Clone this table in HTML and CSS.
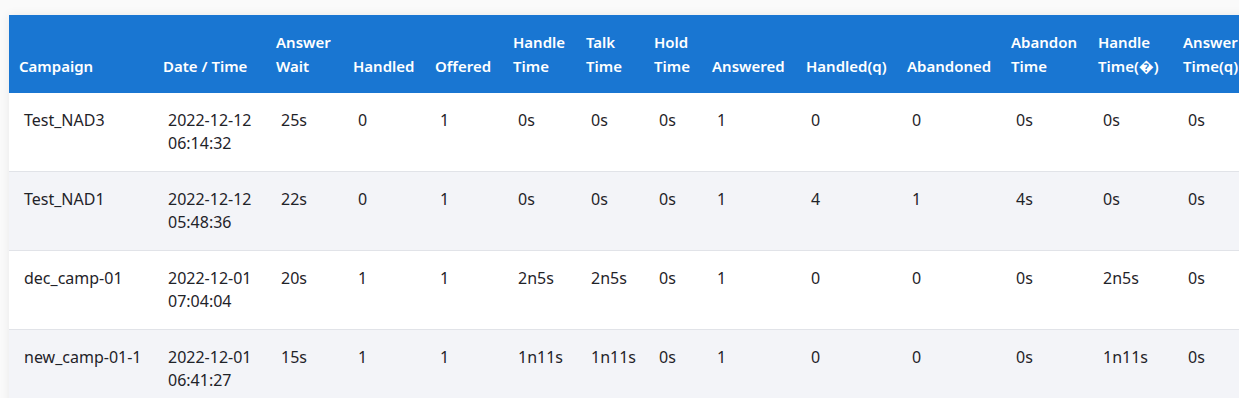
FILE: index.html
```html
<!DOCTYPE html>
<html>
<head>
<meta charset="utf-8">
<link rel="stylesheet" href="styles.css">
</head>
<body>
<div class="page">
  <div class="card">
    <table class="report">
      <thead>
        <tr>
          <th>Campaign</th>
          <th>Date / Time</th>
          <th>Answer<br>Wait</th>
          <th>Handled</th>
          <th>Offered</th>
          <th>Handle<br>Time</th>
          <th>Talk<br>Time</th>
          <th>Hold<br>Time</th>
          <th>Answered</th>
          <th>Handled(q)</th>
          <th>Abandoned</th>
          <th>Abandon<br>Time</th>
          <th>Handle<br>Time(&#xFFFD;)</th>
          <th>Answer<br>Time(q)</th>
        </tr>
      </thead>
      <tbody>
        <tr>
          <td>Test_NAD3</td><td>2022-12-12<br>06:14:32</td><td>25s</td><td>0</td><td>1</td><td>0s</td><td>0s</td><td>0s</td><td>1</td><td>0</td><td>0</td><td>0s</td><td>0s</td><td>0s</td>
        </tr>
        <tr>
          <td>Test_NAD1</td><td>2022-12-12<br>05:48:36</td><td>22s</td><td>0</td><td>1</td><td>0s</td><td>0s</td><td>0s</td><td>1</td><td>4</td><td>1</td><td>4s</td><td>0s</td><td>0s</td>
        </tr>
        <tr>
          <td>dec_camp-01</td><td>2022-12-01<br>07:04:04</td><td>20s</td><td>1</td><td>1</td><td>2n5s</td><td>2n5s</td><td>0s</td><td>1</td><td>0</td><td>0</td><td>0s</td><td>2n5s</td><td>0s</td>
        </tr>
        <tr>
          <td>new_camp-01-1</td><td>2022-12-01<br>06:41:27</td><td>15s</td><td>1</td><td>1</td><td>1n11s</td><td>1n11s</td><td>0s</td><td>1</td><td>0</td><td>0</td><td>0s</td><td>1n11s</td><td>0s</td>
        </tr>
      </tbody>
    </table>
  </div>
</div>
</body>
</html>
```

FILE: styles.css
```css
html, body {
  margin: 0;
  padding: 0;
  overflow: hidden;
  background: #fafafa;
}

.page {
  padding: 15px 0 0 9px;
  width: 1400px;
}

.card {
  display: inline-block;
  background: #ffffff;
  box-shadow: 0 0 10px rgba(0, 0, 0, 0.07);
}

.report {
  border-collapse: collapse;
  table-layout: fixed;
  font-family: "Noto Sans", "Open Sans", sans-serif;
  font-size: 16px;
  color: #1f2329;
  width: 1254px;
}

.report th {
  background: #1976d2;
  color: #ffffff;
  font-size: 15px;
  font-weight: 600;
  text-align: left;
  vertical-align: bottom;
  line-height: 24px;
  padding: 15px 4px 15px 10px;
  white-space: nowrap;
}

.report td {
  vertical-align: top;
  line-height: 23px;
  padding: 16px 4px 16px 15px;
  border-bottom: 1px solid #e1e3e8;
  white-space: nowrap;
}

.report tbody tr:nth-child(even) td {
  background: #f3f4f8;
}

.report th:nth-child(1) { width: 130px; }
.report th:nth-child(2) { width: 99px; }
.report th:nth-child(3) { width: 63px; }
.report th:nth-child(4) { width: 68px; }
.report th:nth-child(5) { width: 64px; }
.report th:nth-child(6) { width: 59px; }
.report th:nth-child(7) { width: 54px; }
.report th:nth-child(8) { width: 44px; }
.report th:nth-child(9) { width: 80px; }
.report th:nth-child(10) { width: 87px; }
.report th:nth-child(11) { width: 90px; }
.report th:nth-child(12) { width: 73px; }
.report th:nth-child(13) { width: 71px; }
.report th:nth-child(14) { width: 76px; }
```
